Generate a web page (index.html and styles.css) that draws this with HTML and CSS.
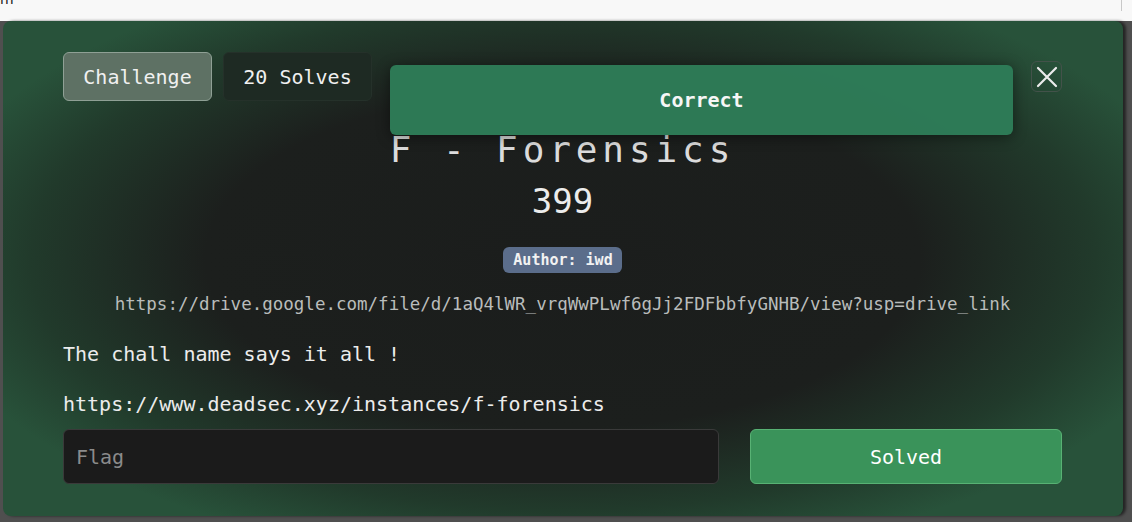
FILE: index.html
```html
<!DOCTYPE html>
<html lang="en">
<head>
<meta charset="utf-8">
<title>F - Forensics</title>
<link rel="stylesheet" href="styles.css">
</head>
<body>
<div class="topbar"><span class="topbar-text">m</span><span class="topbar-line"></span></div>
<div class="backdrop">
  <div class="modal">
    <div class="header">
      <div class="tabs">
        <button class="tab tab-active">Challenge</button>
        <button class="tab">20 Solves</button>
      </div>
      <button class="close" aria-label="Close">
        <svg width="22" height="22" viewBox="0 0 22 22"><path d="M2 2 L20 20 M20 2 L2 20" stroke="#ececec" stroke-width="2.2" stroke-linecap="round" fill="none"/></svg>
      </button>
    </div>
    <h1 class="title">F - Forensics</h1>
    <div class="points">399</div>
    <div class="badge-row"><span class="badge">Author: iwd</span></div>
    <div class="drive">https://drive.google.com/file/d/1aQ4lWR_vrqWwPLwf6gJj2FDFbbfyGNHB/view?usp=drive_link</div>
    <p class="desc">The chall name says it all !</p>
    <p class="desc desc-link">https://www.deadsec.xyz/instances/f-forensics</p>
    <div class="submit-row">
      <input class="flag" type="text" placeholder="Flag">
      <button class="solved">Solved</button>
    </div>
    <div class="toast">Correct</div>
  </div>
</div>
</body>
</html>
```
FILE: styles.css
```css
* { box-sizing: border-box; }
html, body { margin: 0; padding: 0; }
body {
  width: 1132px;
  height: 522px;
  overflow: hidden;
  background: #4f4f4f;
  font-family: "DejaVu Sans Mono", "Liberation Mono", monospace;
}
.topbar {
  height: 21px;
  background: #f8f8f8;
  position: relative;
  overflow: hidden;
}
.topbar-text {
  display: block;
  font-family: "DejaVu Sans", sans-serif;
  font-size: 14px;
  line-height: 14px;
  margin-top: -8px;
  color: #222;
}
.topbar-line {
  position: absolute;
  left: 1121px;
  top: 0;
  width: 1px;
  height: 11px;
  background: #c8c8c8;
}
.backdrop {
  height: 501px;
  padding-left: 3px;
  background: #4f4f4f;
}
.modal {
  position: relative;
  width: 1120px;
  height: 495px;
  border-radius: 8px;
  padding: 31px 61px 0 60px;
  background:
    radial-gradient(ellipse 58% 62% at 50% 48%, #1b1d1c 0%, #1c1f1d 55%, #213a2b 82%, #28523a 100%),
    #28523a;
  box-shadow: 3px 0 3px rgba(0,0,0,0.55);
  color: #ececec;
}
.header {
  display: flex;
  justify-content: space-between;
  align-items: flex-start;
  height: 49px;
}
.tabs { display: flex; gap: 11px; }
.tab {
  width: 149px;
  height: 49px;
  border-radius: 6px;
  font-family: inherit;
  font-size: 20px;
  line-height: 24px;
  padding: 1px 0 0;
  color: #f0f0f0;
  background: #1e2a23;
  border: 1px solid #25312a;
}
.tab-active {
  background: #5e7164;
  border-color: #8fa095;
}
.close {
  margin-top: 9px;
  width: 31px;
  height: 31px;
  border-radius: 6px;
  background: transparent;
  border: 1px solid #43524a;
  padding: 0;
  display: flex;
  align-items: center;
  justify-content: center;
}
.title {
  margin: 27px 0 0;
  text-align: center;
  font-weight: normal;
  font-size: 36px;
  line-height: 44px;
  letter-spacing: 4.9px;
  color: #dcdcdc;
}
.points {
  margin-top: 8px;
  text-align: center;
  font-size: 34px;
  line-height: 42px;
  color: #ececec;
}
.badge-row {
  margin-top: 25px;
  display: flex;
  justify-content: center;
}
.badge {
  display: inline-block;
  height: 26px;
  line-height: 26px;
  padding: 0 9px 0 10px;
  border-radius: 6px;
  background: #5b6d8b;
  color: #f2f2f2;
  font-weight: bold;
  font-size: 15px;
}
.drive {
  margin-top: 19px;
  text-align: center;
  font-size: 17.5px;
  line-height: 24px;
  color: #b9bcbb;
}
.desc {
  margin: 26px 0 0;
  font-size: 20px;
  line-height: 24px;
  color: #ececec;
}
.desc-link { margin-top: 26px; }
.submit-row {
  margin-top: 13px;
  display: flex;
  gap: 31px;
  height: 55px;
}
.flag {
  width: 656px;
  height: 55px;
  background: #1b1b1b;
  border: 1px solid #3a3a3a;
  border-radius: 6px;
  padding: 0 12px;
  font-family: inherit;
  font-size: 20px;
  color: #ececec;
  outline: none;
}
.flag::placeholder { color: #8b8b8b; }
.solved {
  width: 312px;
  height: 55px;
  background: #3a935a;
  border: 1px solid #58b274;
  border-radius: 6px;
  font-family: inherit;
  font-size: 20px;
  color: #ffffff;
  padding: 0;
}
.toast {
  position: absolute;
  left: 387px;
  top: 44px;
  width: 623px;
  height: 70px;
  border-radius: 6px;
  background: #2e7d58;
  opacity: 0.96;
  box-shadow: 0 2px 14px rgba(0,0,0,0.45);
  display: flex;
  align-items: center;
  justify-content: center;
  font-weight: bold;
  font-size: 20px;
  color: #ffffff;
}
```
